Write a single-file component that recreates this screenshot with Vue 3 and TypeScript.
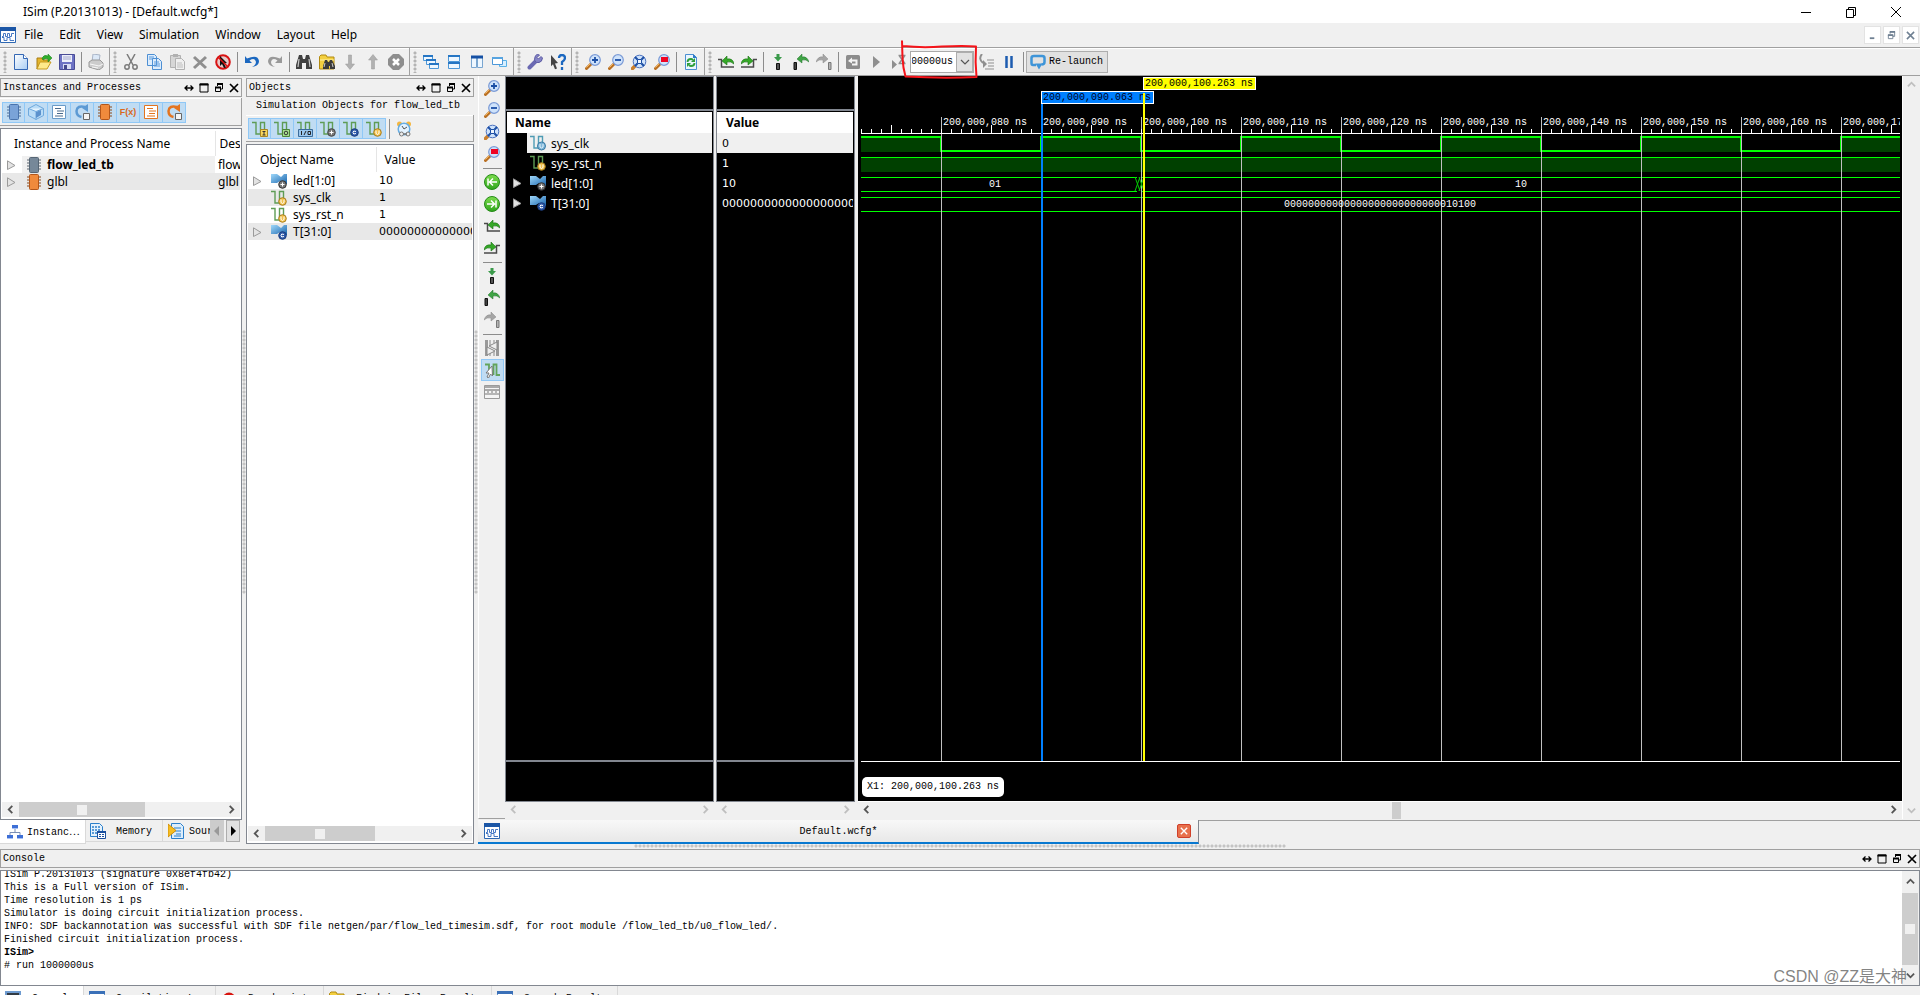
<script setup lang="ts">
interface Tool { icon: string; label: string }
type Entry = Tool | null

const t = (icon: string, label: string): Tool => ({ icon, label })

const menus = ['File', 'Edit', 'View', 'Simulation', 'Window', 'Layout', 'Help']

const groups: Entry[][] = [
  [t('new', 'New'), t('open', 'Open'), t('save', 'Save'), null, t('print', 'Print')],
  [
    t('cut', 'Cut'), t('copy', 'Copy'), t('paste', 'Paste'), t('delete', 'Delete'), t('deselect', 'Deselect'), null,
    t('undo', 'Undo'), t('redo', 'Redo'), null,
    t('find', 'Find'), t('findfiles', 'Find in files'), t('down', 'Next'), t('up', 'Previous'), t('stop', 'Stop'),
  ],
  [t('cascade', 'Cascade'), t('rows', 'Tile horizontally'), t('cols', 'Tile vertically'), t('layers', 'Float')],
  [t('wrench', 'Preferences'), t('help', 'What is this')],
  [t('zoomin', 'Zoom in'), t('zoomout', 'Zoom out'), t('zoomfit', 'Zoom to full view'), t('zoomsel', 'Zoom to cursors'), null, t('reload', 'Reload')],
]

const waveNav: Entry[] = [
  t('prev', 'Previous transition'), t('next', 'Next transition'), null,
  t('marker', 'Add marker'), t('markprev', 'Previous marker'), t('marknext', 'Next marker'), null,
  t('restart', 'Restart'), t('run', 'Run all'), t('runfor', 'Run for'),
]

const sideTools: Entry[] = [
  t('zoomin', 'Zoom in'), t('zoomout', 'Zoom out'), t('zoomfit', 'Zoom to full view'), t('zoomsel', 'Zoom to cursors'), null,
  t('gostart', 'Go to time 0'), t('goend', 'Go to latest time'), t('prev', 'Previous transition'), t('next', 'Next transition'), null,
  t('marker', 'Add marker'), t('markprev', 'Previous marker'), t('marknext', 'Next marker'), null,
  t('swap', 'Swap cursors'), t('snap', 'Snap to transition'), t('ruler', 'Floating ruler'),
]

const instanceTools = ['chip', 'cube', 'list', 'proc', 'chipo', 'fx', 'listo', 'proco']
const objectTools = ['sigI', 'sigO', 'sigIO', 'sigPlus', 'sigC', 'sigV']
const dockTools = [t('arrows', 'Move'), t('max', 'Maximize'), t('float', 'Float'), t('close', 'Close')]

const instances = [
  { name: 'flow_led_tb', icon: 'chipd', info: 'flow', bold: true },
  { name: 'glbl', icon: 'chipo', info: 'glbl', bold: false },
]
const zeros = '00000000000000000000000000010100'
const objects = [
  { name: 'led[1:0]', icon: 'bus', value: '10', open: true },
  { name: 'sys_clk', icon: 'sigV', value: '1', open: false },
  { name: 'sys_rst_n', icon: 'sigV', value: '1', open: false },
  { name: 'T[31:0]', icon: 'busC', value: zeros, open: true },
]
const waves = [
  { name: 'sys_clk', icon: 'sigB', value: '0', open: false },
  { name: 'sys_rst_n', icon: 'sigV', value: '1', open: false },
  { name: 'led[1:0]', icon: 'bus', value: '10', open: true },
  { name: 'T[31:0]', icon: 'busC', value: zeros, open: true },
]

const lines = [
  'ISim P.20131013 (signature 0x8ef4fb42)',
  'This is a Full version of ISim.',
  'Time resolution is 1 ps',
  'Simulator is doing circuit initialization process.',
  'INFO: SDF backannotation was successful with SDF file netgen/par/flow_led_timesim.sdf, for root module /flow_led_tb/u0_flow_led/.',
  'Finished circuit initialization process.',
  'ISim>',
  '# run 1000000us',
]
const consoleTabs = [
  t('term', 'Console'), t('log', 'Compilation Log'), t('dot', 'Breakpoints'), t('findfiles', 'Find in Files Results'), t('log', 'Search Results'),
]

// Time axis: 10 px per nanosecond, the first labelled tick is 80 px from the left edge.
const origin = 80
const step = 100
const majors = Array.from({ length: 20 }, (_, i) => ({ x: origin + i * step, label: `200,000,${String(80 + i * 10).padStart(3, '0')} ns` }))
const ticks = Array.from({ length: 208 }, (_, i) => ({ x: i * 10, top: i % 10 === 3 ? 48 : 52 }))
const highs = [{ x: -20, w: 100 }, ...Array.from({ length: 9 }, (_, i) => ({ x: origin + step + i * 2 * step, w: step }))]
const clock = 'M-20 60H80' + Array.from({ length: 9 }, (_, i) => `V74H${180 + i * 200}V60H${280 + i * 200}`).join('')
</script>

<template>
  <svg class="defs" aria-hidden="true">
    <defs>
      <linearGradient id="gb" x1="0" y1="0" x2="1" y2="1"><stop offset="0" stop-color="#fff" /><stop offset="1" stop-color="#a9cdf3" /></linearGradient>
      <linearGradient id="gl" x1="0" y1="0" x2="1" y2="1"><stop offset="0" stop-color="#9fd8fa" /><stop offset="1" stop-color="#1763ac" /></linearGradient>
      <linearGradient id="gg" x1="0" y1="0" x2="0" y2="1"><stop offset="0" stop-color="#7ddc4e" /><stop offset="1" stop-color="#2fa51c" /></linearGradient>
    </defs>
    <symbol id="new" viewBox="0 0 16 16"><path d="M1.500 .5h9l4 4v11h-13z" fill="url(#gb)" stroke="#3467b4" /><path d="M10.500 .5v4h4" fill="#fff" stroke="#3467b4" /></symbol>
    <symbol id="open" viewBox="0 0 16 16"><path d="M1 4h5l1 2h6v3H4l-3 6z" fill="#e5b52c" stroke="#a87c12" /><path d="M4 8h11l-4 7H1z" fill="#ffe98a" stroke="#c79a1f" /><path d="M6 4q2-4 6-2V0l4 4-4 4V5Q9 4 7 6z" fill="#2fae2c" stroke="#16781b" stroke-width=".5" /></symbol>
    <symbol id="save" viewBox="0 0 16 16"><path d="M.5 .5h15v15H.5z" fill="#6d72c4" stroke="#4a4c96" /><path d="M3 1h10v7H3z" fill="#eceefa" /><path d="M4 3h8M4 5h8" stroke="#a6aace" /><path d="M4 10h8v5H4z" fill="#d8dbf2" /><path d="M5 11h3v4H5z" fill="#44478c" /></symbol>
    <symbol id="print" viewBox="0 0 16 16"><path d="M4 8 5 0l7 1-1 7z" fill="#dce9f8" stroke="#a9b4c6" /><path d="m1 8 3-2h8l3 3v4l-4 3-10-3z" fill="#ccc" stroke="#999" /><path d="m2 10 9 2 4-2M4 13l6 1" fill="none" stroke="#f7f7f7" /></symbol>
    <symbol id="cut" viewBox="0 0 16 16"><path d="m4 0 6 11M12 0 6 11" stroke="#7b7b7b" stroke-width="1.500" /><circle cx="4" cy="13" r="2.200" fill="none" stroke="#7b7b7b" stroke-width="1.500" /><circle cx="12" cy="13" r="2.200" fill="none" stroke="#7b7b7b" stroke-width="1.500" /></symbol>
    <symbol id="copy" viewBox="0 0 16 16"><path d="M1.500 .5h7l2 2v9h-9zM6.500 4.500h6l3 3v8h-9z" fill="#dcecfc" stroke="#4d8fd3" /><path d="M3 3h5M3 5h4M8 8h5M8 10h6M8 12h6" stroke="#5b9add" /></symbol>
    <symbol id="paste" viewBox="0 0 16 16"><path d="M1.500 1.500h10v12h-10z" fill="#d6d6d6" stroke="#b1b1b1" /><path d="M4 0h5v3H4z" fill="#b1b1b1" /><path d="M6.500 4.500h6l3 3v8h-9z" fill="#efefef" stroke="#b1b1b1" /><path d="M8 9h5M8 11h6M8 13h6" stroke="#bdbdbd" /></symbol>
    <symbol id="delete" viewBox="0 0 16 16"><path d="m2 3 12 11M14 3 2 14" stroke="#8f8f8f" stroke-width="3" /></symbol>
    <symbol id="deselect" viewBox="0 0 16 16"><circle cx="8" cy="8" r="6.800" fill="#e8c9c9" stroke="#d91313" stroke-width="2" /><path d="m5 2 7 7-3 .5 2 4-2 .5-2-4-2 2z" fill="#111" /><path d="m3 3 10 10" stroke="#d91313" stroke-width="1.500" /></symbol>
    <symbol id="undo" viewBox="0 0 16 16"><path d="M1 2v7h7L5.500 6.500Q11 3 12 8q0 3-4 5 7-1 7-6-1-7-12-2.500z" fill="#1c68c0" /></symbol>
    <symbol id="redo" viewBox="0 0 16 16"><path d="M15 2v7H8l2.500-2.500Q5 3 4 8q0 3 4 5-7-1-7-6 1-7 12-2.500z" fill="#999" /></symbol>
    <symbol id="find" viewBox="0 0 16 16"><path d="M3 1h3l1 4h2l1-4h3l3 10v4h-6V9H6v6H0v-4z" fill="#404040" /><path d="M3 5 2 13M13 5l1 8" stroke="#c9c9c9" stroke-width="1.200" /></symbol>
    <symbol id="findfiles" viewBox="0 0 16 16"><path d="M.5 2.500 2 1h5l1 2h7v12H.5z" fill="#f3cf3f" stroke="#b28a10" /><path d="M1 6h14" stroke="#fff3a8" /><path d="M6 6h2l1 2h1l1-2h2l3 6v3h-5v-3h-1v3H4v-3z" fill="#3b3b3b" /><path d="m6 9-1 4M13 9l1 4" stroke="#ccc" /></symbol>
    <symbol id="down" viewBox="0 0 16 16"><path d="M6.500 1h3v9h3L8 15.500 3.500 10h3z" fill="#b1b1b1" stroke="#999" stroke-width=".5" /></symbol>
    <symbol id="up" viewBox="0 0 16 16"><path d="M6.500 15h3V6h3L8 .5 3.500 6h3z" fill="#b1b1b1" stroke="#999" stroke-width=".5" /></symbol>
    <symbol id="stop" viewBox="0 0 16 16"><path d="M5 0h6l5 5v6l-5 5H5l-5-5V5z" fill="#8e8e8e" /><path d="m5 5 6 6M11 5l-6 6" stroke="#fff" stroke-width="2.500" /></symbol>
    <symbol id="cascade" viewBox="0 0 16 16"><g fill="#eef7ff" stroke="#4c97d8"><path d="M.5 1.500h9v5h-9zM3.500 5.500h9v5h-9zM6.500 9.500h9v5h-9z" /></g><path d="M0 2h10M3 6h10M6 10h10" stroke="#2676c4" stroke-width="2" /></symbol>
    <symbol id="rows" viewBox="0 0 16 16"><path d="M2.500 1.500h11v6h-11zM2.500 8.500h11v6h-11z" fill="#eef7ff" stroke="#4c97d8" /><path d="M2 2h12M2 9h12" stroke="#2676c4" stroke-width="2" /></symbol>
    <symbol id="cols" viewBox="0 0 16 16"><path d="M2.500 2.500h5v11h-5zM8.500 2.500h5v11h-5z" fill="#eef7ff" stroke="#7aa6d0" /><path d="M2 3h12" stroke="#1550a4" stroke-width="3" /></symbol>
    <symbol id="layers" viewBox="0 0 16 16"><path d="M7.500 6.500h7v6h-7z" fill="#d7efff" stroke="#58b0e6" /><path d="M.5 3.500h10v7H.5z" fill="#fff" stroke="#4c97d8" /><path d="M0 4h11" stroke="#58a4e0" stroke-width="2" /></symbol>
    <symbol id="wrench" viewBox="0 0 16 16"><path d="m2.500 13.500 7-7" stroke="#6a69b2" stroke-width="4" stroke-linecap="round" /><path d="M14 2.500 11.500 5 10 3.500 12.500 1Q9-.5 8 3t0 4q1 2 4 1.500T15.500 4z" fill="#8584c6" stroke="#5d5ca3" /></symbol>
    <symbol id="help" viewBox="0 0 16 16"><path d="m1 1 7 8-3 .5 2 5-2 .8-2-5-2 2z" fill="#444" /><path d="M9 4q0-3 3-3t3 3q0 2-3 4v3M12 13v3" fill="none" stroke="#1c68c0" stroke-width="2.300" /></symbol>
    <symbol id="glass" viewBox="0 0 16 16"><path d="m1.500 14.500 5-5" stroke="#b96f22" stroke-width="3" stroke-linecap="round" /><path d="m1.500 13.500 4-4" stroke="#f5b55b" /><circle cx="10" cy="6" r="5.300" fill="#cfe3fb" stroke="#7a9ad6" stroke-width="1.200" /></symbol>
    <symbol id="zoomin" viewBox="0 0 16 16"><use href="#glass" /><path d="M10 3v6M7 6h6" stroke="#1c4fa5" stroke-width="1.800" /></symbol>
    <symbol id="zoomout" viewBox="0 0 16 16"><use href="#glass" /><path d="M7 6h6" stroke="#1c4fa5" stroke-width="1.800" /></symbol>
    <symbol id="zoomfit" viewBox="0 0 16 16"><path d="m1.500 14.500 4-4" stroke="#c97f2e" stroke-width="3.500" stroke-linecap="round" /><circle cx="8.500" cy="7.500" r="6.300" fill="#cfe3fb" stroke="#4a70bf" /><path d="M6.500 5.500h4v4h-4z" fill="#eef5fe" stroke="#1c4fa5" /><path d="m4 3 2.500 2.500M13 3l-2.500 2.500M4 12l2.500-2.500M13 12l-2.500-2.500" stroke="#1c4fa5" stroke-width="2" /></symbol>
    <symbol id="zoomsel" viewBox="0 0 16 16"><use href="#glass" /><path d="M7 3h7v5H7z" fill="#f00422" /></symbol>
    <symbol id="reload" viewBox="0 0 16 16"><path d="M2.500 .5h8l3 3v12h-11z" fill="#eaf6ff" stroke="#4b8fd2" /><path d="M10 0v4h4z" fill="#2f7cc8" /><path d="M4.500 8q0-3 3.500-3 1 0 2 1M11.500 9q0 3-3.500 3-1 0-2-1" fill="none" stroke="#2d9e3a" stroke-width="1.800" /><path d="M12 4v4H8zM4 13V9h4z" fill="#2d9e3a" /></symbol>
    <symbol id="prev" viewBox="0 0 16 16"><path d="M0 5.500h3.500v7.500H16" fill="none" stroke="#4a4a4a" stroke-width="1.500" /><path d="m4 7 5-5v3q6-1 7 5-3-3-7-2v3z" fill="#35a827" stroke="#197115" stroke-width=".6" /></symbol>
    <symbol id="next" viewBox="0 0 16 16"><path d="M16 5.500h-3.500v7.500H0" fill="none" stroke="#4a4a4a" stroke-width="1.500" /><path d="M12 7 7 2v3Q1 4 0 10q3-3 7-2v3z" fill="#35a827" stroke="#197115" stroke-width=".6" /></symbol>
    <symbol id="marker" viewBox="0 0 16 16"><path d="M6.500 0h3v3h2.500L8 7.500 4 3h2.500z" fill="#3a9a4a" /><path d="M6.500 9.500h3v6h-3z" fill="#555" stroke="#111" /></symbol>
    <symbol id="markprev" viewBox="0 0 16 16"><path d="M1 8.500h2.500v7H1z" fill="#444" stroke="#111" /><path d="m4 5 5-5v3q5-1 7 5-3-3-7-2v3z" fill="#3fa445" stroke="#20702a" stroke-width=".5" /></symbol>
    <symbol id="marknext" viewBox="0 0 16 16"><path d="M12.500 8.500H15v7h-2.500z" fill="#b4b4b4" stroke="#777" /><path d="M12 5 7 0v3Q2 2 0 8q3-3 7-2v3z" fill="#a5a5a5" stroke="#888" stroke-width=".5" /></symbol>
    <symbol id="restart" viewBox="0 0 16 16"><rect x="1" y="1" width="14" height="14" rx="1.500" fill="#8c8c8c" /><path d="m3 7 4-3.500v2h5.500v6H7v-2h3.500v-2H7v2z" fill="#f4f4f4" /></symbol>
    <symbol id="run" viewBox="0 0 16 16"><path d="M5 2v12l7-6z" fill="#8f8f8f" /></symbol>
    <symbol id="runfor" viewBox="0 0 16 16"><path d="M1 6v9l5-4.500z" fill="#8f8f8f" /><path d="M7.500 1.500h7M7.500 9.500h7M8.500 2l5 7M13.500 2l-5 7" stroke="#8f8f8f" stroke-width="1.500" /></symbol>
    <symbol id="step" viewBox="0 0 16 16"><path d="M4 0Q0 5 5 9" fill="none" stroke="#8f8f8f" stroke-width="2" /><path d="m5 6 4 4-4 4z" fill="#8f8f8f" /><path d="M9 6h7M10 9h6M10 12h6M7 15h9" stroke="#8f8f8f" /></symbol>
    <symbol id="pause" viewBox="0 0 16 16"><path d="M5.500 2v12M10.500 2v12" stroke="#1d5cb0" stroke-width="2.500" /></symbol>
    <symbol id="relaunch" viewBox="0 0 16 16"><path d="M6 11H3Q1.500 11 1.500 9V4Q1.500 2 4 2h8q2.500 0 2.500 2v4q0 2.500-3 2.500" fill="none" stroke="#3d94d8" stroke-width="2.500" /><path d="M5.500 9.500h7L9 15.500z" fill="#3d94d8" /></symbol>
    <symbol id="gostart" viewBox="0 0 16 16"><circle cx="8" cy="8" r="7.500" fill="url(#gg)" stroke="#258a18" /><path d="M4 4.500v7M13 8H6M9 4.500 5.500 8 9 11.500" fill="none" stroke="#fff" stroke-width="1.500" /></symbol>
    <symbol id="goend" viewBox="0 0 16 16"><circle cx="8" cy="8" r="7.500" fill="url(#gg)" stroke="#258a18" /><path d="M12 4.500v7M3 8h7M7 4.500 10.500 8 7 11.500" fill="none" stroke="#fff" stroke-width="1.500" /></symbol>
    <symbol id="swap" viewBox="0 0 16 16"><path d="M1 0h3v16H1zM12 0h3v16h-3z" fill="#999" /><path d="M6 0v6M10 0v3M6 13v3M10 12v4" stroke="#888" /><path d="m13 2-8 4 8 4zM3 7l8 4-8 4z" fill="#eee" stroke="#888" /></symbol>
    <symbol id="snap" viewBox="0 0 16 16"><path d="M1 2.500h4V9M9.500 13V2.500h3V13H16" fill="none" stroke="#63a35b" stroke-width="1.800" /><path d="M8 4 2 11h3l-2 4 1.500 1L6.500 12l2 2z" fill="#fff" stroke="#777" /></symbol>
    <symbol id="ruler" viewBox="0 0 16 16"><path d="M.5 1.500h15v13H.5z" fill="#f5f5f5" stroke="#9a9a9a" /><path d="M1 3h14M1 6h14" stroke="#a9a9a9" stroke-width="2" /><path d="M4 7v2M8 7v2M12 7v2M1 10h14" stroke="#777" /></symbol>
    <symbol id="chip" viewBox="0 0 16 16"><path d="M1 3h14M1 6h14M1 9h14M1 12h14" stroke="#4f6d95" stroke-width="1.200" /><rect x="3.500" y=".5" width="9" height="15" rx="1" fill="#7aa3d8" stroke="#4a74ad" /></symbol>
    <symbol id="chipd" viewBox="0 0 16 16"><path d="M1 3h14M1 6h14M1 9h14M1 12h14" stroke="#5c6670" stroke-width="1.200" /><rect x="3.500" y=".5" width="9" height="15" rx="1" fill="#768899" stroke="#566675" /></symbol>
    <symbol id="chipo" viewBox="0 0 16 16"><path d="M1 3h14M1 6h14M1 9h14M1 12h14" stroke="#8a4a1c" stroke-width="1.200" /><rect x="3.500" y=".5" width="9" height="15" rx="1" fill="#f08a3c" stroke="#b3561a" /></symbol>
    <symbol id="cube" viewBox="0 0 16 16"><path d="m8 .5 7.500 4v7L8 15.500.5 11.500v-7z" fill="#b9dcf7" stroke="#6fa9dd" /><path d="m.5 4.500 7.500 3 7.500-3M8 7.500v8" fill="#e6f4ff" stroke="#6fa9dd" /><path d="m8 8 5-2v5l-5 3z" fill="#5b91cd" /></symbol>
    <symbol id="list" viewBox="0 0 16 16"><path d="M1.500 1.500h13v13h-13z" fill="#fff" stroke="#6a9bc8" /><path d="M4 4.500h6M6 7h7M6 9.500h6M4 12h8" stroke="#4a6a8c" /></symbol>
    <symbol id="listo" viewBox="0 0 16 16"><path d="M1.500 1.500h13v13h-13z" fill="#fff" stroke="#e37420" /><path d="M4 4.500h6M6 7h7M6 9.500h6M4 12h8" stroke="#e37420" /></symbol>
    <symbol id="proc" viewBox="0 0 16 16"><path d="M11 3Q3 1 2.500 7q0 5 5 6" fill="none" stroke="#5c9ad4" stroke-width="2.500" /><path d="M14 0v8l-6-4z" fill="#5c9ad4" /><path d="M9.500 9.500h6v6h-6z" fill="#f4f4f4" stroke="#666" /></symbol>
    <symbol id="proco" viewBox="0 0 16 16"><path d="M11 3Q3 1 2.500 7q0 5 5 6" fill="none" stroke="#e37420" stroke-width="2.500" /><path d="M14 0v8l-6-4z" fill="#e37420" /><path d="M9.500 9.500h6v6h-6z" fill="#f4f4f4" stroke="#666" /></symbol>
    <symbol id="sig" viewBox="0 0 16 16"><path d="M0 1.500h4V13h4.500V1.500h4V10" fill="none" stroke="#5e9c55" stroke-width="1.400" /></symbol>
    <symbol id="sigI" viewBox="0 0 16 16"><use href="#sig" /><path d="M8.500 8.500h7v7h-7z" fill="#f8d65c" stroke="#a98420" /><path d="M10.500 10.500h3M12 10.500v3.500M10.500 14h3" stroke="#333" /></symbol>
    <symbol id="sigO" viewBox="0 0 16 16"><use href="#sig" /><path d="M8.500 8.500h7v7h-7z" fill="#a5df8e" stroke="#4c8638" /><circle cx="12" cy="12" r="1.800" fill="none" stroke="#333" /></symbol>
    <symbol id="sigIO" viewBox="0 0 16 16"><use href="#sig" /><path d="M1.500 8.500h14v7h-14z" fill="#9ac7ee" stroke="#3b6c9b" /><path d="M4.500 10v4M7 14l2-4M11 10.500h2.500v3H11z" fill="none" stroke="#222" /></symbol>
    <symbol id="sigPlus" viewBox="0 0 16 16"><use href="#sig" /><circle cx="11.500" cy="11.500" r="3.800" fill="#777" stroke="#444" /><path d="M11.500 9.500v4M9.500 11.500h4" stroke="#fff" /></symbol>
    <symbol id="sigC" viewBox="0 0 16 16"><use href="#sig" /><circle cx="11.500" cy="11.500" r="3.800" fill="#2c58a8" stroke="#1c3d7c" /><path d="M13 10.500q-3-1.500-3 1t3 1" fill="none" stroke="#fff" /></symbol>
    <symbol id="sigV" viewBox="0 0 16 16"><use href="#sig" /><circle cx="11.500" cy="11.500" r="3.800" fill="#f2c14a" stroke="#a87d1e" /><path d="M10 9.500v3q1.500 2 3 0v-3" fill="none" stroke="#fff" /></symbol>
    <symbol id="sigB" viewBox="0 0 16 16"><path d="M0 1.500h4V13h4.500V1.500h4V10" fill="none" stroke="#4f9cb4" stroke-width="1.400" /><circle cx="11.500" cy="11" r="4" fill="#7fb6d8" stroke="#3a7ba3" /><path d="M10 9v3q1.500 2 3 0V9" fill="none" stroke="#e5f3fb" /></symbol>
    <symbol id="busbase" viewBox="0 0 16 16"><path d="M0 1h6l4 3 3-3h3v10h-4L9 8l-3 2H0z" fill="url(#gl)" /></symbol>
    <symbol id="bus" viewBox="0 0 16 16"><use href="#busbase" /><circle cx="11.500" cy="11.500" r="3.800" fill="#777" stroke="#333" /><path d="M11.500 9.500v4M9.500 11.500h4" stroke="#fff" /></symbol>
    <symbol id="busC" viewBox="0 0 16 16"><use href="#busbase" /><circle cx="11.500" cy="11.500" r="3.800" fill="#2c58a8" stroke="#1c3d7c" /><path d="M13 10.500q-3-1.500-3 1t3 1" fill="none" stroke="#fff" /></symbol>
    <symbol id="alarm" viewBox="0 0 16 16"><circle cx="3.500" cy="3" r="2.500" fill="#f4b63f" /><circle cx="12.500" cy="3" r="2.500" fill="#f4b63f" /><circle cx="8" cy="8" r="5.800" fill="#e4f3ff" stroke="#67ade2" stroke-width="1.500" /><path d="m6 5 2 3 3-2" fill="none" stroke="#555" /><circle cx="5.500" cy="13" r="2" fill="#eee" stroke="#777" /><circle cx="12" cy="13" r="2" fill="#eee" stroke="#777" /><path d="M7 13h4" stroke="#777" stroke-width="1.500" /></symbol>
    <symbol id="arrows" viewBox="0 0 10 10"><path d="M1 5h8M3.500 2.500 1 5l2.500 2.500M6.500 2.500 9 5 6.500 7.500" fill="none" stroke="#000" stroke-width="1.300" /></symbol>
    <symbol id="max" viewBox="0 0 10 10"><path d="M1 1h8v8H1z" fill="none" stroke="#000" /><path d="M.5 1.500h9" stroke="#000" stroke-width="2" /></symbol>
    <symbol id="float" viewBox="0 0 10 10"><path d="M3.500 3V1h5v5H6.500M1.500 4.500h5v4h-5z" fill="none" stroke="currentColor" /><path d="M3 1h6M1 4.500h6" stroke="currentColor" stroke-width="2" /></symbol>
    <symbol id="close" viewBox="0 0 10 10"><path d="m1 1 8 8M9 1 1 9" stroke="currentColor" stroke-width="1.700" /></symbol>
    <symbol id="left" viewBox="0 0 10 10"><path d="M7 1 3 5l4 4" fill="none" stroke="currentColor" stroke-width="2" /></symbol>
    <symbol id="right" viewBox="0 0 10 10"><path d="m3 1 4 4-4 4" fill="none" stroke="currentColor" stroke-width="2" /></symbol>
    <symbol id="chevup" viewBox="0 0 10 10"><path d="m1 7 4-4 4 4" fill="none" stroke="currentColor" stroke-width="2" /></symbol>
    <symbol id="chevdown" viewBox="0 0 10 10"><path d="m1 3 4 4 4-4" fill="none" stroke="currentColor" stroke-width="2" /></symbol>
    <symbol id="thin" viewBox="0 0 10 10"><path d="m1 3 4 4 4-4" fill="none" stroke="#555" stroke-width="1.200" /></symbol>
    <symbol id="tri" viewBox="0 0 10 10"><path d="M1.500 .8 9 5.500l-7.500 4z" fill="#e3e3e3" stroke="#9a9a9a" /></symbol>
    <symbol id="wavewin" viewBox="0 0 16 16"><path d="M.5 .5h15v15H.5z" fill="#fff" stroke="#2e68b2" /><path d="M0 2h16" stroke="#1b56a6" stroke-width="4" /><path d="M2 9.500h1.500v-3h2v3h2v-3h2v3h2v-3H14M2 10.500h2v3h3v-3h3v3h4" fill="none" stroke="#4779c4" /></symbol>
    <symbol id="app" viewBox="0 0 16 16"><path d="M0 0h16v16H0z" fill="#8db4dc" /><path d="M1 2q5 0 7 3t7 2v3q-6 0-8-2T1 6z" fill="#dcebf8" /><circle cx="12" cy="10" r="3.500" fill="#ccc" stroke="#666" /><path d="M1 13h10" stroke="#345d92" stroke-width="3" /></symbol>
    <symbol id="org" viewBox="0 0 16 16"><path d="M8 5v4M3 11V8.500h10V11" fill="none" stroke="#7a8fb5" /><path d="M5 1h6v4H5zM0 11h6v4H0zM10 11h6v4h-6z" fill="#3d6fd6" /><path d="M5 4.500h6M0 14.500h6M10 14.500h6" stroke="#a9c1f4" /></symbol>
    <symbol id="mem" viewBox="0 0 16 16"><path d="M.5 .5h9l3 3v10H.5z" fill="#e4f1fc" stroke="#2b7fca" /><path d="M2 4h8M2 7h8M2 10h5" stroke="#2b7fca" stroke-width="1.500" stroke-dasharray="2 1" /><path d="M7.500 8.500h8v7h-8z" fill="#fff" stroke="#1c4f9e" /><path d="M7 9h9" stroke="#1c4f9e" stroke-width="2" /><path d="M9 11.500h5M9 13.500h5" stroke="#1c4f9e" stroke-dasharray="2 1" /></symbol>
    <symbol id="src" viewBox="0 0 16 16"><path d="M3.500 .5h9l3 3v12h-12z" fill="#dcedfb" stroke="#2b7fca" /><path d="M6 5h7M6 8h7M8 11h5M6 13h7" stroke="#2b7fca" /><path d="m0 1 8 6.500L0 14z" fill="#f7bd20" stroke="#cf8f0a" /></symbol>
    <symbol id="term" viewBox="0 0 16 16"><path d="M1 1h14v14H1z" fill="#333b44" stroke="#6e9bd0" stroke-width="2" /><path d="m3 4 2 2-2 2M6 8h4" fill="none" stroke="#fff" /></symbol>
    <symbol id="log" viewBox="0 0 16 16"><path d="M.5 .5h15v15H.5z" fill="#fff" stroke="#6b95ca" /><path d="M0 1.500h16" stroke="#3a70b8" stroke-width="3" /><path d="M2 5.500h6M2 8h7M2 10.500h7" stroke="#999" stroke-dasharray="2 1" /></symbol>
    <symbol id="dot" viewBox="0 0 16 16"><circle cx="8" cy="8" r="6.500" fill="#d8150f" /></symbol>
  </svg>

  <div class="app">
    <header class="title">
      <svg class="ic"><use href="#app" /></svg>
      <h1>ISim (P.20131013) - [Default.wcfg*]</h1>
      <div class="sys">
        <button aria-label="Minimize"><svg viewBox="0 0 12 12"><path d="M1 6.500h10" stroke="#000" /></svg></button>
        <button aria-label="Restore"><svg viewBox="0 0 12 12"><path d="M1.500 3.500h7v8h-7zM3.500 3.500v-2h7v8h-2" fill="none" stroke="#000" /></svg></button>
        <button aria-label="Close"><svg viewBox="0 0 12 12"><path d="m1 1 10 10M11 1 1 11" stroke="#000" /></svg></button>
      </div>
    </header>

    <nav class="menu">
      <svg class="ic"><use href="#wavewin" /></svg>
      <button v-for="m in menus" :key="m">{{ m }}</button>
      <div class="child">
        <button aria-label="Minimize document"><svg viewBox="0 0 10 10"><path d="M2 8h5" stroke="#6f8092" stroke-width="2" /></svg></button>
        <button aria-label="Restore document"><svg><use href="#float" /></svg></button>
        <button aria-label="Close document"><svg><use href="#close" /></svg></button>
      </div>
    </nav>

    <div class="toolbar">
      <div v-for="(g, i) in groups" :key="i" class="group">
        <i class="grip" />
        <template v-for="(e, j) in g" :key="j">
          <button v-if="e" class="tool" :aria-label="e.label"><svg><use :href="'#' + e.icon" /></svg></button>
          <i v-else class="sep" />
        </template>
      </div>
      <div class="group last">
        <i class="grip" />
        <template v-for="(e, j) in waveNav" :key="j">
          <button v-if="e" class="tool" :aria-label="e.label"><svg><use :href="'#' + e.icon" /></svg></button>
          <i v-else class="sep" />
        </template>
        <div class="combo">
          <div class="field"><input type="text" value="1000000us" aria-label="Run time" /></div>
          <button aria-label="Run time choices"><svg><use href="#thin" /></svg></button>
          <svg class="ring" viewBox="0 0 84 42" aria-hidden="true"><path d="M5 2.500 5.500 20Q6 30 8.500 38.500q36 2 71 .5Q78 24 79 8.500q-12-1-34 0-20 1.500-39-.5" fill="none" stroke="#f5141a" stroke-width="2" stroke-linejoin="round" /></svg>
        </div>
        <button class="tool" aria-label="Step"><svg><use href="#step" /></svg></button>
        <button class="tool" aria-label="Break"><svg><use href="#pause" /></svg></button>
        <i class="sep" />
        <button class="relaunch"><svg class="ic"><use href="#relaunch" /></svg>Re-launch</button>
      </div>
    </div>

    <main class="main">
      <section class="dock inst">
        <div class="dockhead">
          <h2>Instances and Processes</h2>
          <button v-for="d in dockTools" :key="d.icon" :aria-label="d.label"><svg><use :href="'#' + d.icon" /></svg></button>
        </div>
        <div class="filters">
          <button v-for="k in instanceTools" :key="k" class="on" :aria-label="'Show ' + k">
            <span v-if="k === 'fx'">F(x)</span>
            <svg v-else><use :href="'#' + k" /></svg>
          </button>
        </div>
        <div class="tree">
          <table>
            <colgroup><col class="c1" /><col /></colgroup>
            <thead><tr><th>Instance and Process Name</th><th>Des</th></tr></thead>
            <tbody>
              <tr v-for="r in instances" :key="r.name" :class="{ bold: r.bold }">
                <td><div class="cell"><svg class="tri"><use href="#tri" /></svg><span class="hold"><svg class="ic"><use :href="'#' + r.icon" /></svg>{{ r.name }}</span></div></td>
                <td>{{ r.info }}</td>
              </tr>
            </tbody>
          </table>
          <div class="hbar"><button aria-label="Scroll left"><svg><use href="#left" /></svg></button><i class="thumb w1"><i /></i><button aria-label="Scroll right"><svg><use href="#right" /></svg></button></div>
        </div>
        <div class="tabs">
          <button class="cur"><svg class="ic"><use href="#org" /></svg>Instanc⋯</button>
          <button class="mid"><svg class="ic"><use href="#mem" /></svg>Memory</button>
          <button class="cut"><svg class="ic"><use href="#src" /></svg>Source Files</button>
          <button class="arrow off" aria-label="Previous tab"><svg viewBox="0 0 10 12"><path d="M7 1v10L2 6z" fill="#999" /></svg></button>
          <button class="arrow" aria-label="Next tab"><svg viewBox="0 0 10 12"><path d="M3 1v10l5-5z" fill="#000" /></svg></button>
        </div>
      </section>
      <div class="gutter" />

      <section class="dock objs">
        <div class="dockhead">
          <h2>Objects</h2>
          <button v-for="d in dockTools" :key="d.icon" :aria-label="d.label"><svg><use :href="'#' + d.icon" /></svg></button>
        </div>
        <p class="caption">Simulation Objects for flow_led_tb</p>
        <div class="filters">
          <button v-for="k in objectTools" :key="k" class="on" :aria-label="'Show ' + k"><svg><use :href="'#' + k" /></svg></button>
          <i class="sep" />
          <button aria-label="Link"><svg><use href="#alarm" /></svg></button>
        </div>
        <div class="tree">
          <table>
            <colgroup><col class="c1" /><col /></colgroup>
            <thead><tr><th>Object Name</th><th>Value</th></tr></thead>
            <tbody>
              <tr v-for="r in objects" :key="r.name">
                <td><div class="cell"><svg class="tri"><use v-if="r.open" href="#tri" /></svg><span class="hold"><svg class="ic"><use :href="'#' + r.icon" /></svg>{{ r.name }}</span></div></td>
                <td class="num">{{ r.value }}</td>
              </tr>
            </tbody>
          </table>
          <div class="hbar"><button aria-label="Scroll left"><svg><use href="#left" /></svg></button><i class="thumb w2"><i /></i><button aria-label="Scroll right"><svg><use href="#right" /></svg></button></div>
        </div>
      </section>
      <div class="gutter" />

      <section class="doc">
        <div class="wavewin">
          <div class="side">
            <template v-for="(e, j) in sideTools" :key="j">
              <button v-if="e" :class="{ on: e.icon === 'snap' }" :aria-label="e.label"><svg><use :href="'#' + e.icon" /></svg></button>
              <i v-else class="rule" />
            </template>
          </div>
          <div class="col names">
            <div class="pane">
              <div class="cap" />
              <table>
                <thead><tr><th>Name</th></tr></thead>
                <tbody>
                  <tr v-for="(r, i) in waves" :key="r.name" :class="{ sel: i === 0 }">
                    <td><div class="cell"><svg class="tri"><use v-if="r.open" href="#tri" /></svg><span class="hold"><svg class="ic"><use :href="'#' + r.icon" /></svg>{{ r.name }}</span></div></td>
                  </tr>
                </tbody>
              </table>
              <div class="foot" />
            </div>
            <div class="hbar dim"><button aria-label="Scroll left"><svg><use href="#left" /></svg></button><button aria-label="Scroll right"><svg><use href="#right" /></svg></button></div>
          </div>
          <div class="col values">
            <div class="pane">
              <div class="cap" />
              <table>
                <thead><tr><th>Value</th></tr></thead>
                <tbody><tr v-for="(r, i) in waves" :key="r.name" :class="{ sel: i === 0 }"><td class="num">{{ r.value }}</td></tr></tbody>
              </table>
              <div class="foot" />
            </div>
            <div class="hbar dim"><button aria-label="Scroll left"><svg><use href="#left" /></svg></button><button aria-label="Scroll right"><svg><use href="#right" /></svg></button></div>
          </div>
          <div class="col plot">
            <div class="canvas">
              <svg class="wave" role="img" aria-label="Waveform">
                <g shape-rendering="crispEdges">
                  <rect v-for="h in highs" :key="h.x" :x="h.x" y="60" :width="h.w" height="15" fill="#004000" />
                  <rect x="0" y="80" width="100%" height="15" fill="#004000" />
                  <path :d="clock" fill="none" stroke="#0f0" stroke-width="2" />
                  <rect v-for="y in [80, 100, 114, 120, 134]" :key="y" x="0" :y="y" width="100%" height="1" fill="#0f0" />
                  <rect v-for="m in majors" :key="m.x" :x="m.x" y="40" width="1" height="100%" fill="#c0c0c0" />
                  <rect v-for="k in ticks" :key="k.x" :x="k.x" :y="k.top" width="1" :height="56 - k.top" fill="#fff" />
                  <rect x="0" y="56" width="100%" height="1" fill="#fff" />
                  <rect x="276" y="100" width="4" height="15" fill="#000" />
                </g>
                <path d="m274 100 5 14M279 100l-5 14M278 100l5 14M283 100l-5 14" fill="none" stroke="#0c0" />
                <text v-for="m in majors" :key="m.x" :x="m.x + 2" y="48" fill="#fff">{{ m.label }}</text>
                <text x="128" y="110" fill="#fff">01</text>
                <text x="654" y="110" fill="#fff">10</text>
                <text x="423" y="130" fill="#fff">{{ zeros }}</text>
                <rect x="180" y="14" width="2" height="100%" fill="#0080ff" />
                <rect x="180.500" y="14.500" width="112" height="12" fill="#0080ff" stroke="#fff" />
                <text x="182" y="23" fill="#002">200,000,090.063 ns</text>
                <rect x="282" y="16" width="2" height="100%" fill="#ff0" />
                <rect x="282.500" y=".5" width="112" height="12" fill="#ff0" stroke="#fff" />
                <text x="284" y="9" fill="#000">200,000,100.263 ns</text>
              </svg>
              <div class="readout"><output>X1: 200,000,100.263 ns</output></div>
            </div>
            <div class="hbar"><button aria-label="Scroll left"><svg><use href="#left" /></svg></button><i class="thumb w3" /><button aria-label="Scroll right"><svg><use href="#right" /></svg></button></div>
          </div>
          <div class="vbar dim"><button aria-label="Scroll up"><svg><use href="#chevup" /></svg></button><button aria-label="Scroll down"><svg><use href="#chevdown" /></svg></button></div>
        </div>
        <div class="doctabs">
          <div class="doctab">
            <svg class="ic"><use href="#wavewin" /></svg>
            <button class="label">Default.wcfg*</button>
            <button class="x" aria-label="Close tab"><svg><use href="#close" /></svg></button>
          </div>
          <div class="rest" />
        </div>
      </section>
    </main>

    <section class="console">
      <div class="dockhead">
        <h2>Console</h2>
        <button v-for="d in dockTools" :key="d.icon" :aria-label="d.label"><svg><use :href="'#' + d.icon" /></svg></button>
      </div>
      <div class="log">
        <div class="text"><p v-for="l in lines" :key="l" :class="{ prompt: l === 'ISim>' }">{{ l }}</p></div>
        <div class="vbar"><button aria-label="Scroll up"><svg><use href="#chevup" /></svg></button><i class="thumb"><i /></i><button aria-label="Scroll down"><svg><use href="#chevdown" /></svg></button></div>
        <span class="mark">CSDN @ZZ是大神</span>
      </div>
      <div class="ctabs">
        <button v-for="(c, i) in consoleTabs" :key="c.label" :class="{ cur: i === 0 }"><svg class="ic"><use :href="'#' + c.icon" /></svg>{{ c.label }}</button>
      </div>
    </section>
  </div>
</template>

<style>
body { overflow: hidden; }
</style>

<style scoped>
* { box-sizing: border-box; }
.defs { position: absolute; width: 0; height: 0; }
.app {
  display: flex; flex-direction: column; height: 100vh; overflow: hidden; background: #f0f0f0; color: #000;
  font: 10px/13px "Liberation Mono", "Noto Sans CJK SC", monospace;
}
button { margin: 0; padding: 0; border: 0; background: none; font: inherit; color: inherit; display: flex; align-items: center; justify-content: center; flex: none; }
h1, h2, p { margin: 0; font: inherit; }
svg { display: block; flex: none; }
.ic { width: 16px; height: 16px; }

.title { display: flex; align-items: center; height: 23px; background: #fff; padding: 0 2px; gap: 5px; font: 12px/20px "Noto Sans", sans-serif; flex: none; }
.sys { margin-left: auto; display: flex; }
.sys button { width: 45px; height: 20px; }
.sys svg { width: 12px; height: 12px; }
.menu { display: flex; align-items: center; height: 24px; flex: none; font: 12px/20px "Noto Sans", sans-serif; gap: 16px; }
.menu > svg { margin-right: -8px; }
.child { margin-left: auto; display: flex; gap: 2px; padding-right: 1px; color: #6f8092; }
.child button { width: 17px; height: 18px; background: #fff; border: 1px solid #e3e3e3; }
.child svg { width: 9px; height: 9px; }

.toolbar { display: flex; height: 29px; flex: none; border-top: 1px solid #a0a0a0; border-bottom: 1px solid #a0a0a0; box-shadow: inset 0 1px #fff; }
.group { display: flex; align-items: center; padding-right: 2px; border-right: 1px solid #a0a0a0; }
.group.last { border-right: 0; }
.grip { width: 9px; height: 22px; background: radial-gradient(circle at 5px 2px, #b4b4b4 1px, transparent 2px) 0 0 / 9px 4px; }
.tool { width: 23px; height: 24px; }
.tool svg { width: 16px; height: 16px; }
.sep { width: 1px; height: 20px; margin: 0 2px 0 3px; background: #8c8c8c; }
.combo { position: relative; display: flex; width: 64px; height: 22px; border: 1px solid #aaa; background: #fff; }
.field { flex: 1; display: flex; justify-content: flex-end; overflow: hidden; margin-left: 1px; }
.field input { width: 57px; flex: none; border: 0; padding: 0 3px 0 0; font: inherit; background: none; outline: 0; }
.combo button { width: 17px; background: #e1e1e1; border: 1px solid #adadad; }
.combo button svg { width: 10px; height: 10px; }
.combo .ring { position: absolute; left: -14px; top: -14px; width: 84px; height: 42px; pointer-events: none; z-index: 2; }
.relaunch { height: 22px; padding: 0 4px 0 3px; gap: 3px; background: #e1e1e1; border: 1px solid #adadad; }

.main { display: flex; flex: 1; min-height: 0; padding-bottom: 5px; }
.dock { display: flex; flex-direction: column; padding-top: 2px; flex: none; }
.inst { width: 242px; }
.objs { width: 228px; }
.gutter { width: 4px; display: flex; align-items: center; background: radial-gradient(circle at 2px 2px, #c4c4c4 1px, transparent 2px) center / 4px 4px; background-clip: content-box; padding: 254px 0 250px; }
.dockhead { display: flex; align-items: center; height: 19px; border: 1px solid #a0a0a0; padding: 0 0 0 2px; flex: none; }
.dockhead h2 { flex: 1; }
.dockhead button { width: 15px; height: 16px; }
.dockhead svg { width: 10px; height: 10px; }
.filters { display: flex; align-items: center; height: 28px; margin-top: 1px; padding: 1px 0 0 2px; border: solid #a0a0a0; border-width: 0 1px 1px 0; box-shadow: inset 0 1px #fff; flex: none; }
.filters button { width: 23px; height: 21px; }
.filters .on { background: #c0dcf3; border: 1px solid #90c8f6; border-left-width: 0; }
.filters .on:first-child { border-left-width: 1px; }
.filters svg { width: 16px; height: 16px; }
.filters span { color: #d9691c; font: bold 9px "Liberation Sans", sans-serif; }
.caption { height: 18px; line-height: 18px; padding-right: 4px; text-align: center; flex: none; }
.objs .filters { height: 27px; margin-top: 0; }
.tree { flex: 1; min-height: 0; display: flex; flex-direction: column; justify-content: space-between; margin-top: 2px; border: 1px solid #828790; background: #fff; padding: 2px 1px; font: 12px/16px "Noto Sans", sans-serif; }
table { width: 100%; border-collapse: collapse; table-layout: fixed; }
th, td { padding: 0; text-align: left; overflow: hidden; white-space: nowrap; font-weight: normal; }
.tree th { height: 25px; padding-left: 12px; }
.tree th + th { border-left: 1px solid #e5e5e5; padding-left: 4px; }
.tree td { height: 17px; line-height: 16px; padding-left: 4px; }
.tree td + td { padding-left: 3px; }
.inst .c1 { width: 213px; }
.objs .c1 { width: 128px; }
.objs th + th { padding-left: 8px; }
.inst tbody tr:nth-child(2), .objs tbody tr:nth-child(even) { background: #e8e8e8; }
.inst .bold .hold { background: #f0f0f0; font-weight: bold; }
.cell { display: flex; align-items: center; height: 17px; }
.tri { width: 10px; height: 10px; margin-right: 6px; }
.hold { flex: 1; display: flex; align-items: center; gap: 5px; padding-left: 4px; height: 100%; }
.objs .hold { padding-left: 0; gap: 6px; }
.objs .tri { margin-right: 9px; }
td.num { font: 11px/16px "DejaVu Sans", sans-serif; }
.hbar, .vbar { display: flex; background: #f0f0f0; color: #555; }
.hbar { height: 15px; }
.hbar button { width: 17px; height: 15px; }
.hbar svg, .vbar svg { width: 9px; height: 9px; }
.hbar button:last-child { margin-left: auto; }
.thumb { display: flex; align-items: center; justify-content: center; background: #cdcdcd; }
.thumb i { width: 10px; height: 10px; background: #f0f0f0; }
.w1 { width: 126px; }
.w2 { width: 110px; }
.w3 { width: 9px; margin-left: 49.5%; }
.dim { color: #bfbfbf; }
.tabs { display: flex; height: 24px; flex: none; align-items: flex-start; }
.tabs button { height: 22px; justify-content: flex-start; gap: 5px; padding: 1px 0 0 7px; border-bottom: 1px solid #d9d9d9; border-right: 1px solid #d9d9d9; }
.tabs .cur { width: 86px; height: 24px; background: #fff; white-space: nowrap; overflow: hidden; gap: 4px; }
.tabs .mid { width: 77px; gap: 10px; padding-left: 4px; }
.tabs .cut { flex: 1 1 0; width: 0; overflow: hidden; white-space: nowrap; padding-left: 5px; border-right: 0; }
.tabs .arrow { width: 14px; padding: 0; justify-content: center; border: 1px solid #adadad; background: #e1e1e1; margin-right: 2px; }
.tabs .off { background: #ccc; border-color: #ccc; }
.tabs .arrow svg { width: 10px; height: 12px; }

.doc { flex: 1; min-width: 0; display: flex; flex-direction: column; }
.wavewin { flex: 1; min-height: 0; display: flex; }
.side { width: 27px; display: flex; flex-direction: column; align-items: center; padding-top: 1px; border-left: 1px solid #fff; flex: none; border-bottom: 1px solid #a0a0a0; }
.side button { width: 23px; height: 22px; }
.side button svg { width: 16px; height: 16px; }
.side .on { background: #c0dcf3; border: 1px solid #90c8f6; }
.rule { width: 19px; height: 1px; margin: 3px 0 2px; background: #8c8c8c; }
.col { display: flex; flex-direction: column; flex: none; min-width: 0; }
.col .hbar { height: 17px; }
.names { width: 209px; margin-right: 2px; }
.values { width: 139px; margin-right: 3px; }
.pane { flex: 1; min-height: 0; display: flex; flex-direction: column; background: #000; border: 1px solid #828790; color: #fff; font: 12px/16px "Noto Sans", sans-serif; }
.cap { height: 35px; border-bottom: 1px solid #000; box-shadow: inset 0 -2px #828790; flex: none; }
.names .pane table { width: auto; margin: 0 1px; }
.values .pane table { width: auto; margin-right: 1px; }
.pane table { display: block; }
.pane thead, .pane tbody, .pane tr, .pane th, .pane td { display: block; }
.pane th { height: 21px; line-height: 22px; background: #fff; color: #000; font-weight: bold; padding-left: 8px; }
.values .pane th { padding-left: 9px; }
.pane td { height: 20px; line-height: 21px; padding-left: 5px; }
.pane .cell { height: 20px; }
.pane .tri { margin-right: 5px; }
.names .sel .hold, .values .sel td { background: #f0f0f0; color: #000; }
.pane .hold { padding-left: 3px; }
.foot { margin-top: auto; height: 41px; border-top: 2px solid #828790; }
.plot { flex: 1; border-right: 1px solid #fff; }
.canvas { flex: 1; min-height: 0; display: flex; flex-direction: column; background: #000; padding: 1px 2px 0 3px; border-bottom: 1px solid #fff; }
.wave { width: 100%; flex: 1; min-height: 0; border-bottom: 1px solid #fff; overflow: hidden; font: 10px "Liberation Mono", monospace; }
.readout { height: 39px; flex: none; padding: 15px 1px 0; }
.readout output { display: inline-block; height: 20px; line-height: 19px; padding: 0 5px; border-radius: 5px; background: #fff; }
.vbar { width: 17px; flex-direction: column; }
.vbar button { width: 17px; height: 17px; }
.vbar button:last-child { margin-top: auto; }
.doctabs { display: flex; height: 25px; padding-top: 1px; flex: none; }
.doctab { flex: 0 0 50%; display: flex; align-items: center; background: linear-gradient(#f8f8f8, #e8e8e8); border-right: 1px solid #828790; border-bottom: 2px solid #0878d0; padding: 0 7px 0 6px; }
.doctab .label { flex: 1; }
.doctab .x { width: 14px; height: 14px; border-radius: 2px; background: #e8704c; border: 1px solid #d0402a; color: #fff; }
.doctab .x svg { width: 8px; height: 8px; }
.rest { flex: 1; border-top: 1px solid #a0a0a0; }

.console { height: 146px; flex: none; position: relative; }
.console::before { content: ""; position: absolute; top: -5px; left: 33%; right: 33%; height: 4px; background: radial-gradient(circle at 2px 2px, #c4c4c4 1px, transparent 2px) 0 0 / 4px 4px; }
.log { position: relative; display: flex; height: 116px; margin-top: 2px; border: 1px solid #828790; background: #fff; overflow: hidden; }
.text { flex: 1; display: flex; flex-direction: column; justify-content: flex-end; padding: 0 3px 13px; white-space: pre; }
.text p { height: 13px; flex: none; }
.prompt { font-weight: bold; }
.log .vbar .thumb { height: 72px; margin: 2px 1px 0 0; }
.log .vbar button { height: 20px; }
.mark { position: absolute; right: 12px; bottom: -3px; font: 16px/22px "Liberation Sans", "Noto Sans CJK SC", sans-serif; color: rgba(90, 90, 90, .75); }
.ctabs { display: flex; height: 25px; }
.ctabs button { gap: 11px; padding: 0 9px 0 5px; height: 25px; border-right: 1px solid #d9d9d9; }
.ctabs .cur { background: #fff; }
</style>
